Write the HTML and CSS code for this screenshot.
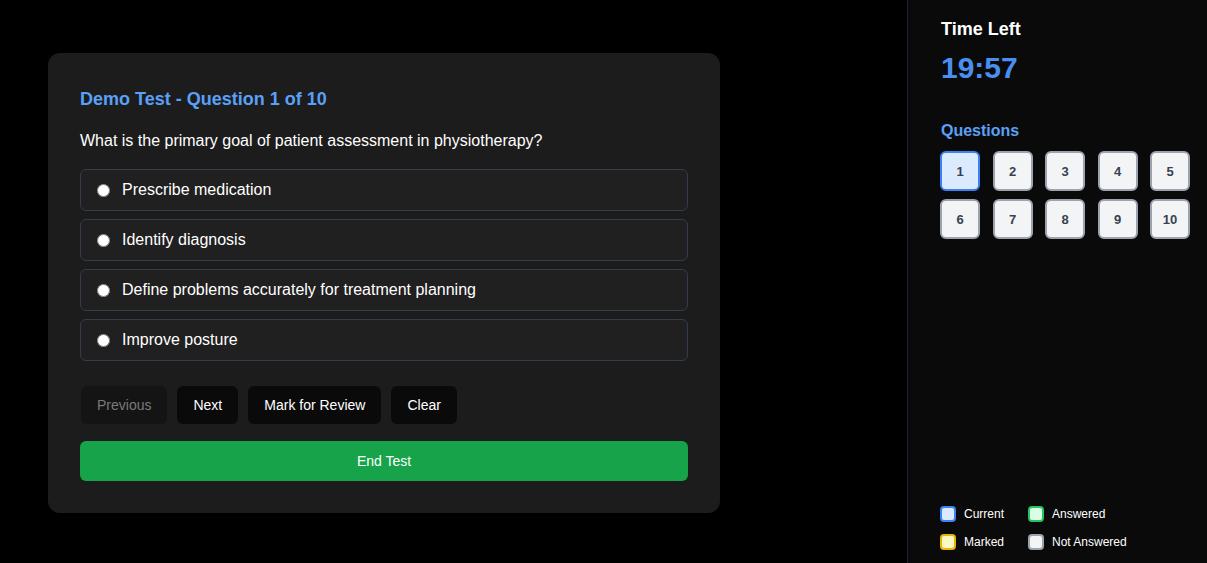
FILE: index.html
```html
<!DOCTYPE html>
<html lang="en">
<head>
<meta charset="utf-8">
<title>Demo Test</title>
<link rel="stylesheet" href="styles.css">
</head>
<body>
<div class="layout">
  <main class="main">
    <section class="card">
      <h1 class="title">Demo Test - Question 1 of 10</h1>
      <p class="question">What is the primary goal of patient assessment in physiotherapy?</p>
      <div class="options">
        <label class="option"><input type="radio" name="q1"><span>Prescribe medication</span></label>
        <label class="option"><input type="radio" name="q1"><span>Identify diagnosis</span></label>
        <label class="option"><input type="radio" name="q1"><span>Define problems accurately for treatment planning</span></label>
        <label class="option"><input type="radio" name="q1"><span>Improve posture</span></label>
      </div>
      <div class="actions">
        <button class="btn btn-disabled">Previous</button>
        <button class="btn">Next</button>
        <button class="btn">Mark for Review</button>
        <button class="btn">Clear</button>
      </div>
      <button class="end">End Test</button>
    </section>
  </main>
  <aside class="sidebar">
    <h2 class="time-label">Time Left</h2>
    <div class="timer">19:57</div>
    <h3 class="q-label">Questions</h3>
    <div class="grid">
      <button class="qb current">1</button>
      <button class="qb">2</button>
      <button class="qb">3</button>
      <button class="qb">4</button>
      <button class="qb">5</button>
      <button class="qb">6</button>
      <button class="qb">7</button>
      <button class="qb">8</button>
      <button class="qb">9</button>
      <button class="qb">10</button>
    </div>
    <div class="legend">
      <div class="leg"><span class="sw sw-current"></span>Current</div>
      <div class="leg"><span class="sw sw-answered"></span>Answered</div>
      <div class="leg"><span class="sw sw-marked"></span>Marked</div>
      <div class="leg"><span class="sw sw-none"></span>Not Answered</div>
    </div>
  </aside>
</div>
</body>
</html>
```

FILE: styles.css
```css
* { box-sizing: border-box; }
html, body { margin: 0; padding: 0; background: #000; }
body {
  font-family: "Liberation Sans", Arial, sans-serif;
  color: #fff;
}
.layout {
  display: flex;
  height: 563px;
}
.main {
  flex: 1;
  display: flex;
  align-items: center;
  padding: 0 48px;
}
.card {
  width: 672px;
  background: #1c1c1c;
  border-radius: 12px;
  padding: 32px;
  margin-top: 3px;
}
.title {
  margin: 0 0 16px;
  font-size: 18px;
  line-height: 28px;
  font-weight: 700;
  color: #5aa0f7;
}
.question {
  margin: 0 0 16px;
  font-size: 16px;
  line-height: 24px;
}
.options {
  display: flex;
  flex-direction: column;
  gap: 8px;
  margin-bottom: 25px;
}
.option {
  display: flex;
  align-items: center;
  gap: 12px;
  height: 42px;
  padding: 0 16px;
  background: #202020;
  border: 1px solid #333d4b;
  border-radius: 6px;
  font-size: 16px;
}
.option input {
  margin: 0;
  width: 13px;
  height: 13px;
}
.actions {
  display: flex;
  gap: 10px;
  margin-bottom: 17px;
  padding-left: 1px;
}
.btn {
  font-family: inherit;
  font-size: 14px;
  line-height: 18px;
  padding: 10px 16px;
  background: #0a0a0a;
  color: #fff;
  border: none;
  border-radius: 6px;
}
.btn-disabled {
  background: #141414;
  color: #7a7a7a;
}
.end {
  display: block;
  width: 100%;
  height: 40px;
  font-family: inherit;
  font-size: 14px;
  color: #fff;
  background: #16a34a;
  border: none;
  border-radius: 6px;
}
.sidebar {
  width: 300px;
  background: #0a0a0a;
  border-left: 1px solid #1c2236;
  padding: 16px 32px 13px 33px;
  display: flex;
  flex-direction: column;
}
.time-label {
  margin: 0 0 8px;
  font-size: 18px;
  line-height: 26px;
  font-weight: 700;
}
.timer {
  font-size: 30px;
  line-height: 36px;
  font-weight: 700;
  color: #4a8ff0;
  margin-bottom: 33px;
}
.q-label {
  margin: 0 0 8px;
  font-size: 16px;
  line-height: 24px;
  font-weight: 700;
  color: #5aa0f7;
}
.grid {
  display: grid;
  grid-template-columns: repeat(5, 40px);
  column-gap: 12.5px;
  row-gap: 8px;
  margin-left: -1px;
}
.qb {
  width: 40px;
  height: 40px;
  padding: 0;
  font-family: inherit;
  font-size: 13px;
  font-weight: 700;
  color: #374151;
  background: #f3f4f6;
  border: 2px solid #9ca3af;
  border-radius: 6px;
}
.qb.current {
  background: #dbeafe;
  border-color: #3b82f6;
}
.legend {
  margin-top: auto;
  margin-left: -1px;
  display: grid;
  grid-template-columns: 88px auto;
  row-gap: 12px;
  font-size: 12px;
}
.leg {
  display: flex;
  align-items: center;
  gap: 8px;
  line-height: 16px;
}
.sw {
  width: 16px;
  height: 16px;
  border: 2px solid;
  border-radius: 4px;
}
.sw-current { background: #dbeafe; border-color: #3b82f6; }
.sw-answered { background: #dcfce7; border-color: #22c55e; }
.sw-marked { background: #fef9c3; border-color: #eab308; }
.sw-none { background: #f3f4f6; border-color: #9ca3af; }
```
